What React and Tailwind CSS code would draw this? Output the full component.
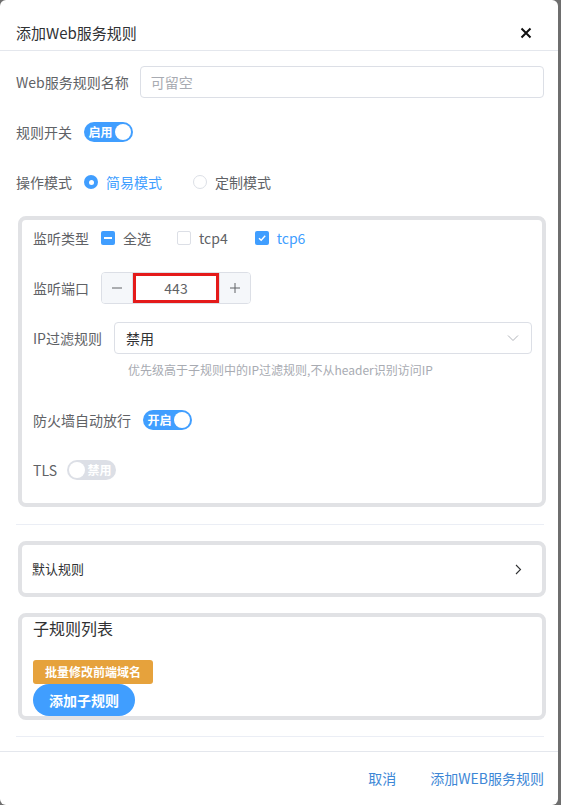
import React from "react";

const font = { fontFamily: '"Noto Sans CJK SC", "Noto Sans", sans-serif' };

const Switch = ({ on, text }) => (
  <div
    className={`flex items-center h-[20px] w-[49px] rounded-full px-[2px] ${
      on ? "bg-[#409eff] flex-row" : "bg-[#dcdfe6] flex-row-reverse"
    }`}
  >
    <span className="flex-1 text-center text-[12px] leading-none font-bold text-white">{text}</span>
    <span className="w-[16px] h-[16px] rounded-full bg-white" />
  </div>
);

const Checkbox = ({ state }) => {
  if (state === "none") {
    return <span className="w-[14px] h-[14px] rounded-[2px] border border-[#dcdfe6] bg-white" />;
  }
  return (
    <span className="w-[14px] h-[14px] rounded-[2px] bg-[#409eff] flex items-center justify-center">
      {state === "half" ? (
        <span className="w-[8px] h-[2px] bg-white" />
      ) : (
        <svg width="10" height="10" viewBox="0 0 10 10">
          <path d="M2 5.2 L4.2 7.3 L8.2 2.8" fill="none" stroke="white" strokeWidth="1.4" />
        </svg>
      )}
    </span>
  );
};

const Row = ({ label, children, className = "", gap = "mr-[12px]" }) => (
  <div className={`flex items-center h-[32px] ${className}`}>
    <span className={`text-[14px] text-[#606266] whitespace-nowrap ${gap}`}>{label}</span>
    {children}
  </div>
);

export default function App() {
  return (
    <div className="w-[561px] h-[805px] bg-[#6e6e6e] overflow-hidden" style={font}>
      <div className="w-[558px] h-[805px] bg-white rounded-[6px] flex flex-col">
        {/* header */}
        <div className="h-[51px] border-b border-[#e4e7ed] flex items-start justify-between pt-[22px] pl-[16px] pr-[26px]">
          <span className="text-[15px] leading-[22px] text-[#303133]">添加Web服务规则</span>
          <svg width="12" height="12" viewBox="0 0 12 12" className="mt-[5px]">
            <path d="M1.5 1.5 L10.5 10.5 M10.5 1.5 L1.5 10.5" stroke="#111" strokeWidth="2" />
          </svg>
        </div>

        {/* body */}
        <div className="flex-1 pl-[16px] pr-[14px] pt-[15px]">
          <Row label="Web服务规则名称" gap="mr-[11px]">
            <div className="flex-1 h-[32px] border border-[#dcdfe6] rounded-[4px] flex items-center px-[10px]">
              <span className="text-[14px] text-[#a8abb2]">可留空</span>
            </div>
          </Row>
          <Row label="规则开关" className="mt-[18px]">
            <Switch on text="启用" />
          </Row>
          <Row label="操作模式" className="mt-[18px]">
            <span className="w-[14px] h-[14px] rounded-full bg-[#409eff] flex items-center justify-center">
              <span className="w-[5px] h-[5px] rounded-full bg-white" />
            </span>
            <span className="ml-[8px] text-[14px] text-[#409eff]">简易模式</span>
            <span className="ml-[31px] w-[14px] h-[14px] rounded-full border border-[#dcdfe6]" />
            <span className="ml-[8px] text-[14px] text-[#606266]">定制模式</span>
          </Row>

          {/* listen panel */}
          <div className="mt-[18px] ml-[2px] w-[528px] border-4 border-[#e1e2e5] rounded-[8px] pl-[11px] pr-[10px] pt-[2px] pb-[17px]">
            <Row label="监听类型">
              <Checkbox state="half" />
              <span className="ml-[8px] text-[14px] text-[#606266]">全选</span>
              <span className="ml-[26px] flex"><Checkbox state="none" /></span>
              <span className="ml-[8px] text-[14px] text-[#606266]">tcp4</span>
              <span className="ml-[27px] flex"><Checkbox state="on" /></span>
              <span className="ml-[8px] text-[14px] text-[#409eff]">tcp6</span>
            </Row>
            <Row label="监听端口" className="mt-[18px]">
              <div className="w-[150px] h-[32px] border border-[#dcdfe6] rounded-[4px] flex overflow-hidden">
                <div className="w-[31px] bg-[#f5f7fa] border-r border-[#dcdfe6] flex items-center justify-center">
                  <svg width="12" height="12" viewBox="0 0 12 12"><path d="M1 6 H11" stroke="#606266" strokeWidth="1" /></svg>
                </div>
                <div className="flex-1 border-[3px] border-[#e41a1a] flex items-center justify-center text-[14px] text-[#606266]">443</div>
                <div className="w-[31px] bg-[#f5f7fa] border-l border-[#dcdfe6] flex items-center justify-center">
                  <svg width="12" height="12" viewBox="0 0 12 12"><path d="M1 6 H11 M6 1 V11" stroke="#606266" strokeWidth="1" /></svg>
                </div>
              </div>
            </Row>
            <Row label="IP过滤规则" className="mt-[18px]">
              <div className="flex-1 h-[32px] border border-[#dcdfe6] rounded-[4px] flex items-center justify-between pl-[11px] pr-[12px]">
                <span className="text-[14px] text-[#303133]">禁用</span>
                <svg width="12" height="8" viewBox="0 0 12 8"><path d="M1 1.5 L6 6.5 L11 1.5" fill="none" stroke="#b0b3b9" strokeWidth="1" /></svg>
              </div>
            </Row>
            <div className="pl-[95px] mt-[6px] text-[12px] leading-[20px] text-[#a8abb2]">
              优先级高于子规则中的IP过滤规则,不从header识别访问IP
            </div>
            <Row label="防火墙自动放行" className="mt-[24px]">
              <Switch on text="开启" />
            </Row>
            <Row label="TLS" className="mt-[18px]" gap="mr-[10px]">
              <Switch text="禁用" />
            </Row>
          </div>

          <div className="mt-[17px] h-px bg-[#ebeef5]" />

          {/* default rule */}
          <div className="mt-[16px] ml-[2px] w-[528px] h-[56px] border-4 border-[#e1e2e5] rounded-[8px] flex items-center justify-between pl-[10px] pr-[20px]">
            <span className="text-[13px] text-[#303133]">默认规则</span>
            <svg width="7" height="11" viewBox="0 0 7 11"><path d="M1 1 L5.5 5.5 L1 10" fill="none" stroke="#303133" strokeWidth="1.1" /></svg>
          </div>

          {/* sub rules */}
          <div className="mt-[16px] ml-[2px] w-[528px] border-4 border-[#e1e2e5] rounded-[8px] pl-[11px]">
            <div className="text-[16px] leading-[22px] text-[#303133]">子规则列表</div>
            <div className="mt-[21px] flex flex-col items-start">
              <div className="h-[24px] w-[120px] bg-[#e6a23c] rounded-[3px] flex items-center justify-center text-[12px] font-bold text-white">批量修改前端域名</div>
              <div className="h-[32px] w-[102px] bg-[#409eff] rounded-full flex items-center justify-center text-[14px] font-bold text-white">添加子规则</div>
            </div>
          </div>

          <div className="mt-[16px] h-px bg-[#ebeef5]" />
        </div>

        {/* footer */}
        <div className="h-[54px] border-t border-[#e4e7ed] flex items-center justify-end pr-[14px] gap-[34px]">
          <span className="text-[14px] text-[#3d87d6]">取消</span>
          <span className="text-[14px] text-[#3d87d6]">添加WEB服务规则</span>
        </div>
      </div>
    </div>
  );
}
